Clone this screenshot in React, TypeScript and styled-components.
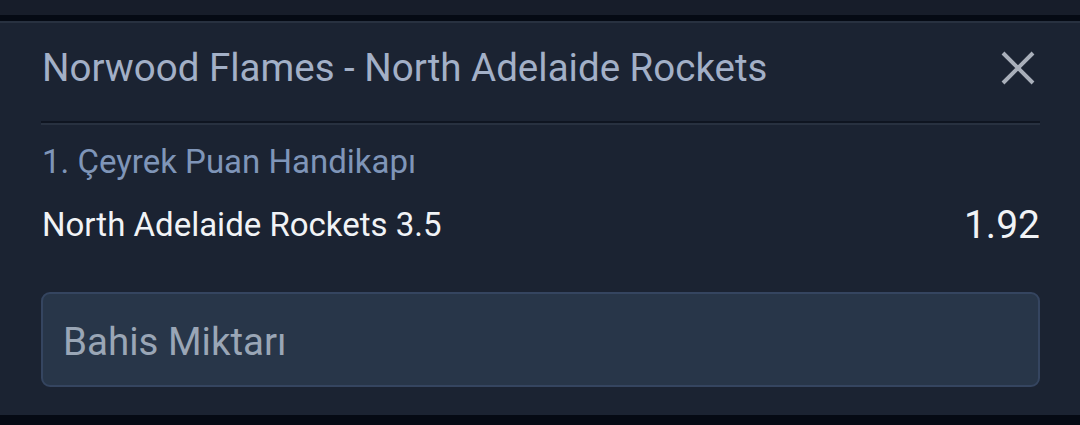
import React from "react";
import styled, { createGlobalStyle } from "styled-components";

const Global = createGlobalStyle`
  html, body { margin: 0; padding: 0; background: #050a14; }
  body { font-family: Roboto, "Noto Sans", sans-serif; }
`;

const Page = styled.div`
  width: 1080px;
  height: 425px;
  display: flex;
  flex-direction: column;
  background: #050a14;
  overflow: hidden;
`;

const TopBand = styled.div`
  height: 15px;
  flex-shrink: 0;
  background: #171d2a;
`;

const Gap = styled.div<{ $h: number }>`
  height: ${(p) => p.$h}px;
  flex-shrink: 0;
  background: #050a14;
`;

const Panel = styled.div`
  height: 394px;
  flex-shrink: 0;
  box-sizing: border-box;
  background: #1b2332;
  border-top: 2px solid #283140;
  padding: 0 40px 0 41px;
  display: flex;
  flex-direction: column;
`;

const Header = styled.div`
  height: 98px;
  box-sizing: border-box;
  padding: 22px 0 0 1px;
  display: flex;
  align-items: flex-start;
  justify-content: space-between;
`;

const Title = styled.div`
  font-size: 38.5px;
  line-height: 46px;
  color: #a3b0c7;
`;

const Close = styled.button`
  width: 36px;
  height: 36px;
  border: none;
  background: none;
  padding: 0;
  margin: 5px 4px 0 0;
  display: flex;
  cursor: pointer;
`;

const Divider = styled.div`
  height: 2px;
  border-top: 2px solid #0f1521;
  background: #283140;
`;

const Market = styled.div`
  margin-top: 17px;
  padding-left: 1px;
  font-size: 33px;
  line-height: 40px;
  color: #7f95b8;
`;

const Selection = styled.div`
  margin-top: 20px;
  height: 46px;
  padding-left: 1px;
  display: flex;
  justify-content: space-between;
  align-items: center;
  color: #f1f3f6;
`;

const SelName = styled.span`
  font-size: 33px;
  line-height: 46px;
`;

const Odds = styled.span`
  font-size: 39px;
  line-height: 46px;
`;

const Stake = styled.div`
  margin-top: 44px;
  height: 95px;
  box-sizing: border-box;
  border: 2px solid #354560;
  border-radius: 9px;
  background: #283649;
  display: flex;
  align-items: center;
  padding: 3px 0 0 20px;
  font-size: 38.5px;
  color: #9aa6b6;
`;

export default function App() {
  return (
    <Page>
      <Global />
      <TopBand />
      <Gap $h={6} />
      <Panel>
        <Header>
          <Title>Norwood Flames - North Adelaide Rockets</Title>
          <Close aria-label="close">
            <svg width="36" height="36" viewBox="0 0 36 36">
              <path d="M3 3 L33 33 M33 3 L3 33" stroke="#a9afba" strokeWidth="4" strokeLinecap="butt" />
            </svg>
          </Close>
        </Header>
        <Divider />
        <Market>1. Çeyrek Puan Handikapı</Market>
        <Selection>
          <SelName>North Adelaide Rockets 3.5</SelName>
          <Odds>1.92</Odds>
        </Selection>
        <Stake>Bahis Miktarı</Stake>
      </Panel>
      <Gap $h={10} />
    </Page>
  );
}
